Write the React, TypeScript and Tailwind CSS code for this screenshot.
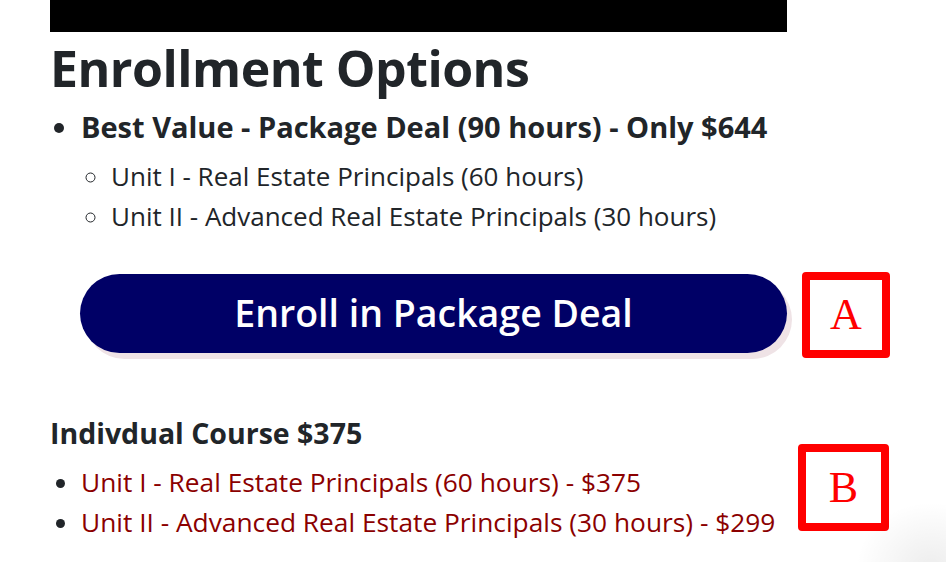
import React from "react";

const font = { fontFamily: '"Open Sans", "Noto Sans", sans-serif' };

function Marker({ letter, wide }: { letter: string; wide?: boolean }) {
  return (
    <div
      className={`flex shrink-0 items-center justify-center rounded-[4px] border-[8px] border-[#ff0000] bg-white ${
        wide ? "h-[87px] w-[91px]" : "h-[86px] w-[88px]"
      }`}
    >
      <span className="text-[44px] leading-none text-[#ff0000]" style={{ fontFamily: '"Liberation Serif", serif' }}>
        {letter}
      </span>
    </div>
  );
}

export default function App() {
  return (
    <div className="relative min-h-[562px] w-[946px] overflow-hidden bg-white pl-[50px] text-[#212529]" style={font}>
      <div className="h-[32px] w-[737px] bg-black" />

      <h1 className="mt-[4px] text-[50px] font-bold leading-[64px] tracking-[-0.5px]">Enrollment Options</h1>

      <ul className="mt-[7px] list-disc pl-[31px] text-[29px] leading-[40px] marker:text-[#212529]">
        <li className="font-bold">
          Best Value - Package Deal (90 hours) - Only $644
          <ul className="mt-[9px] list-[circle] pl-[30px] text-[26px] font-normal leading-[40px] text-[#212529]">
            <li>Unit I - Real Estate Principals (60 hours)</li>
            <li>Unit II - Advanced Real Estate Principals (30 hours)</li>
          </ul>
        </li>
      </ul>

      <div className="mt-[36px] flex items-start gap-[15px] pl-[30px]">
        <button className="mt-[2px] h-[79px] w-[707px] rounded-full bg-[#000066] text-[37.5px] font-semibold text-white shadow-[5px_6px_0_#efe3e6]">
          Enroll in Package Deal
        </button>
        <Marker letter="A" />
      </div>

      <div className="mt-[55px] flex items-start">
        <div className="w-[748px]">
          <h3 className="text-[28.5px] font-bold leading-[40px]">Indivdual Course $375</h3>
          <ul className="mt-[9px] list-disc pl-[31px] text-[26.3px] leading-[40px] text-[#8b0000] marker:text-[#212529]">
            <li>Unit I - Real Estate Principals (60 hours) - $375</li>
            <li>Unit II - Advanced Real Estate Principals (30 hours) - $299</li>
          </ul>
        </div>
        <div className="mt-[31px]">
          <Marker letter="B" wide />
        </div>
      </div>

      {/* soft shadow from a floating widget just off the corner */}
      <div className="pointer-events-none absolute bottom-[-70px] right-[-60px] h-[130px] w-[150px] rounded-full bg-[radial-gradient(closest-side,rgba(0,0,0,0.07),rgba(0,0,0,0))]" />
    </div>
  );
}
